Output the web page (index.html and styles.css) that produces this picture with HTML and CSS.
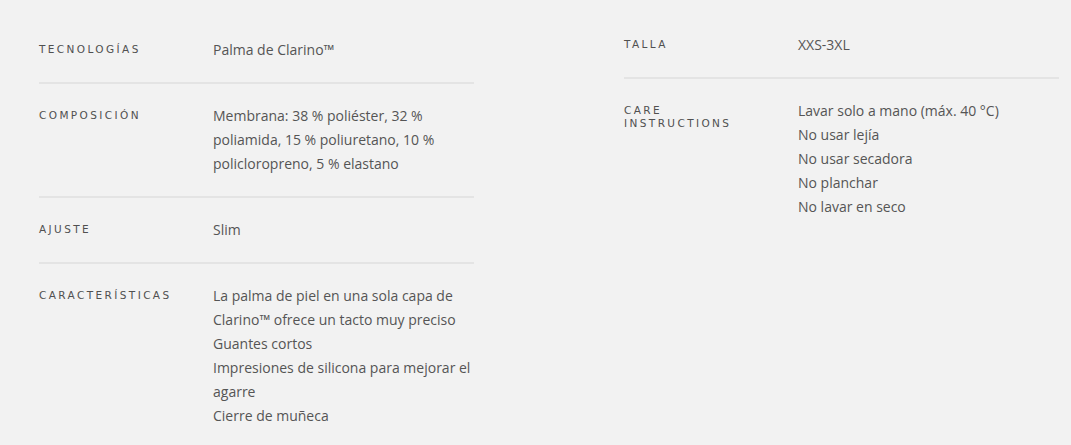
FILE: index.html
```html
<!DOCTYPE html>
<html lang="es">
<head>
<meta charset="utf-8">
<link rel="stylesheet" href="styles.css">
</head>
<body>
<div class="specs">
  <div class="col col-left">
    <div class="row">
      <div class="label">Tecnologías</div>
      <div class="value">Palma de Clarino™</div>
    </div>
    <div class="row">
      <div class="label">Composición</div>
      <div class="value">Membrana: 38 % poliéster, 32 % poliamida, 15 % poliuretano, 10 % policloropreno, 5 % elastano</div>
    </div>
    <div class="row">
      <div class="label">Ajuste</div>
      <div class="value">Slim</div>
    </div>
    <div class="row last">
      <div class="label">Características</div>
      <div class="value">
        <div>La palma de piel en una sola capa de Clarino™ ofrece un tacto muy preciso</div>
        <div>Guantes cortos</div>
        <div>Impresiones de silicona para mejorar el agarre</div>
        <div>Cierre de muñeca</div>
      </div>
    </div>
  </div>
  <div class="col col-right">
    <div class="row">
      <div class="label">Talla</div>
      <div class="value">XXS-3XL</div>
    </div>
    <div class="row last">
      <div class="label">Care instructions</div>
      <div class="value">
        <div>Lavar solo a mano (máx. 40 °C)</div>
        <div>No usar lejía</div>
        <div>No usar secadora</div>
        <div>No planchar</div>
        <div>No lavar en seco</div>
      </div>
    </div>
  </div>
</div>
</body>
</html>
```

FILE: styles.css
```css
html, body {
  margin: 0;
  padding: 0;
  background: #f2f2f2;
}
body {
  font-family: "Open Sans", "Liberation Sans", sans-serif;
  color: #555;
}
.specs {
  display: flex;
  gap: 150px;
  padding: 33px 0 0 39px;
  align-items: flex-start;
}
.col {
  width: 435px;
  display: flex;
  flex-direction: column;
}
.col-left {
  margin-top: 5px;
}
.row {
  display: flex;
  padding: 20px 0;
  border-bottom: 2px solid #e4e4e4;
}
.row:first-child {
  padding-top: 0;
}
.row.last {
  border-bottom: none;
}
.label {
  flex: 0 0 134px;
  padding-right: 40px;
  font-family: "DejaVu Sans", sans-serif;
  font-size: 10.5px;
  line-height: 13px;
  letter-spacing: 2.4px;
  text-transform: uppercase;
  color: #505050;
  padding-top: 5px;
}
.value {
  flex: 1;
  font-size: 14px;
  line-height: 24px;
  color: #555;
}
```
